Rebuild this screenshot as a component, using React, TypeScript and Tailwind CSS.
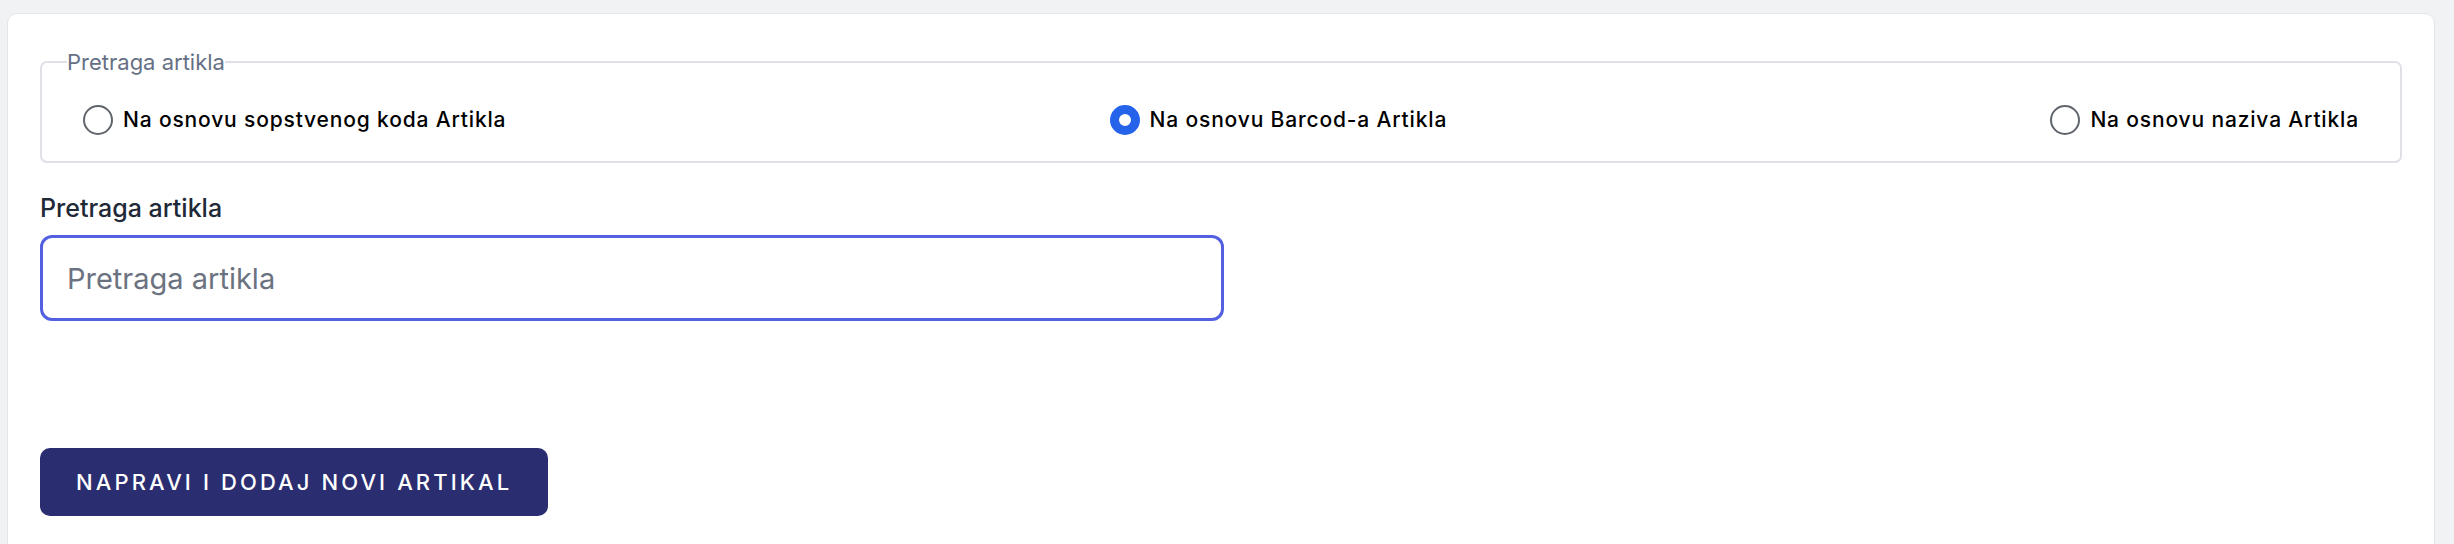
import { useState } from 'react';

type SearchMode = 'code' | 'barcode' | 'name';

const MODES: { id: SearchMode; label: string }[] = [
  { id: 'code', label: 'Na osnovu sopstvenog koda Artikla' },
  { id: 'barcode', label: 'Na osnovu Barcod-a Artikla' },
  { id: 'name', label: 'Na osnovu naziva Artikla' },
];

export default function App() {
  const [mode, setMode] = useState<SearchMode>('barcode');
  const [query, setQuery] = useState('');

  return (
    <div
      className="h-[544px] overflow-hidden bg-[#f1f2f4] pl-[7px] pr-[19px] pt-[13px]"
      style={{ fontFamily: 'Inter, "Noto Sans", sans-serif' }}
    >
      <div className="h-[600px] rounded-[10px] border border-[#e3e5e9] bg-white px-[32px] pt-[33px]">
        <fieldset className="rounded-[7px] border-[2.5px] border-[#dfe1e7] px-[25px] pb-[26px]">
          <legend className="text-[22px] leading-[30px] text-[#667085]">Pretraga artikla</legend>
          <div className="mt-[28px] flex items-center justify-between px-[16px]">
            {MODES.map(m => (
              <label key={m.id} className="flex h-[30px] cursor-pointer items-center gap-[10px]">
                <input
                  type="radio"
                  name="mode"
                  checked={mode === m.id}
                  onChange={() => setMode(m.id)}
                  className="h-[30px] w-[30px] cursor-pointer appearance-none rounded-full border-2 border-[#60646c] bg-white checked:border-[9px] checked:border-[#2563eb]"
                />
                <span className="text-[21px] font-medium tracking-[0.04em] text-black">{m.label}</span>
              </label>
            ))}
          </div>
        </fieldset>

        <label htmlFor="search" className="mt-[27px] block text-[25px] font-medium leading-[36px] text-[#1f2937]">
          Pretraga artikla
        </label>
        <input
          id="search"
          type="text"
          value={query}
          onChange={e => setQuery(e.target.value)}
          placeholder="Pretraga artikla"
          className="mt-[9px] block h-[86px] w-[1184px] rounded-[12px] border-[3px] border-[#5360e2] bg-white pl-[24px] text-[29px] text-[#111827] outline-none placeholder:text-[#6b7280]"
        />

        <button
          type="button"
          className="mt-[127px] h-[68px] rounded-[10px] bg-[#2a2d70] px-[36px] text-[22px] font-medium uppercase tracking-[3.1px] text-white"
        >
          Napravi i dodaj novi artikal
        </button>
      </div>
    </div>
  );
}
